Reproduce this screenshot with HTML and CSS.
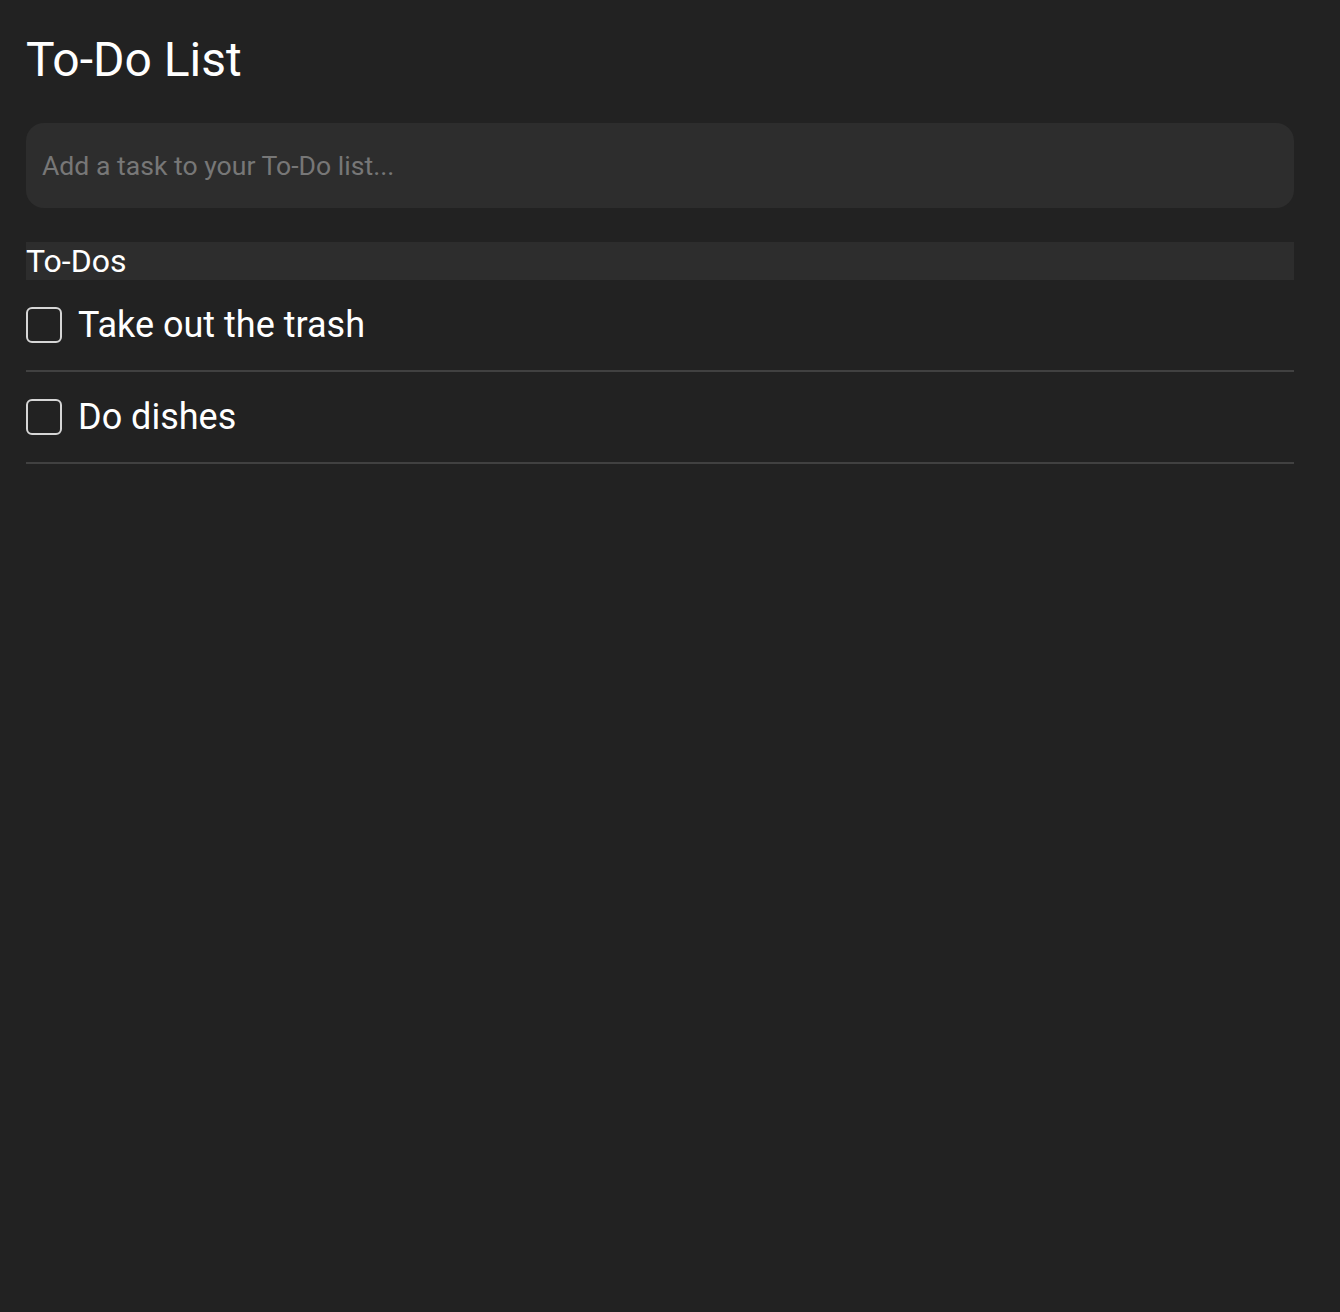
FILE: index.html
```html
<!DOCTYPE html>
<html>
<head>
<meta charset="utf-8">
<link rel="stylesheet" href="styles.css">
</head>
<body>
<main class="app">
  <h1 class="title">To-Do List</h1>
  <div class="add">
    <input class="add-input" type="text" placeholder="Add a task to your To-Do list...">
  </div>
  <h2 class="section">To-Dos</h2>
  <ul class="list">
    <li class="item"><span class="box"></span><span class="label">Take out the trash</span></li>
    <li class="item"><span class="box"></span><span class="label">Do dishes</span></li>
  </ul>
</main>
</body>
</html>
```
FILE: styles.css
```css
html, body {
  margin: 0;
  padding: 0;
  background: #222222;
  height: 100%;
}
body {
  font-family: Roboto, "Liberation Sans", sans-serif;
  color: #ffffff;
}
.app {
  margin: 0 46px 0 26px;
  padding-top: 30px;
}
.title {
  margin: 0;
  font-size: 48px;
  font-weight: 400;
  line-height: 60px;
}
.add {
  margin-top: 33px;
}
.add-input {
  display: block;
  box-sizing: border-box;
  width: 100%;
  height: 85px;
  border: none;
  outline: none;
  border-radius: 18px;
  background: #2d2d2d;
  padding: 0 16px;
  font-family: Roboto, "Liberation Sans", sans-serif;
  font-size: 26.6px;
  color: #ffffff;
}
.add-input::placeholder {
  color: #777777;
}
.section {
  margin: 34px 0 0;
  height: 38px;
  background: #2d2d2d;
  font-size: 32px;
  font-weight: 400;
  line-height: 38px;
}
.list {
  list-style: none;
  margin: 0;
  padding: 0;
}
.item {
  display: flex;
  align-items: center;
  gap: 16px;
  height: 90px;
  border-bottom: 2px solid #414141;
}
.box {
  box-sizing: border-box;
  width: 36px;
  height: 36px;
  border: 2px solid #d6d6d6;
  border-radius: 6px;
  flex: none;
}
.label {
  font-size: 36px;
  line-height: 42px;
}
```
